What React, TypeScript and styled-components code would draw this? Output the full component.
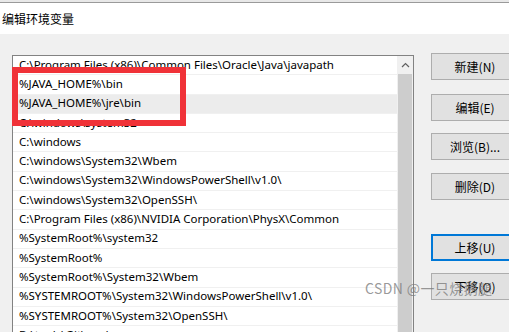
import React from "react";
import styled, { createGlobalStyle } from "styled-components";

const Global = createGlobalStyle`
  html, body { margin: 0; padding: 0; background: #f0f0f0; }
  body { font-family: "Noto Sans", "Noto Sans CJK SC", sans-serif; }
`;

const Window = styled.div`
  width: 509px;
  height: 332px;
  overflow: hidden;
  position: relative;
  background: #f0f0f0;
  display: flex;
  flex-direction: column;
`;

const TopEdge = styled.div`
  flex-shrink: 0;
  height: 2px;
  background: #e8e8e8;
  border-bottom: 1px solid #9a9a9a;
`;

const TitleBar = styled.div`
  flex-shrink: 0;
  height: 31px;
  background: #ffffff;
  display: flex;
  align-items: center;
  padding-left: 2px;
  font-family: "Noto Sans CJK SC", sans-serif;
  font-size: 12px;
  color: #000;
`;

const Body = styled.div`
  flex: 1;
  min-height: 0;
  display: flex;
  align-items: flex-start;
  padding: 21px 0 0 12px;
  gap: 17px;
`;

const ListBox = styled.div`
  position: relative;
  flex-shrink: 0;
  width: 400px;
  height: 300px;
  border: 1px solid #828282;
  border-bottom: none;
  background: #fff;
  display: flex;
`;

const Rows = styled.div`
  flex: 1;
  display: flex;
  flex-direction: column;
`;

const Row = styled.div<{ $sel?: boolean }>`
  flex-shrink: 0;
  height: 19.3px;
  box-sizing: border-box;
  border-bottom: 1px solid #f0f0f0;
  padding: 0 0 2px 6px;
  display: flex;
  align-items: center;
  font-family: "Noto Sans", "Noto Sans CJK SC", sans-serif;
  font-size: 11.5px;
  color: #000;
  white-space: nowrap;
  overflow: hidden;
  background: ${(p) => (p.$sel ? "#ececec" : "#fff")};
`;

const ScrollBar = styled.div`
  width: 16px;
  background: #f0f0f0;
  display: flex;
  flex-direction: column;
`;

const ArrowBtn = styled.div`
  height: 17px;
  display: flex;
  align-items: center;
  justify-content: center;
`;

const Thumb = styled.div`
  flex: 1;
  margin: 1px 1px 0 1px;
  background: #cdcdcd;
`;

const Highlight = styled.div`
  position: absolute;
  left: -1px;
  top: 11px;
  width: 162px;
  height: 47px;
  border: 6px solid #f03238;
  pointer-events: none;
`;

const Buttons = styled.div`
  flex-shrink: 0;
  display: flex;
  flex-direction: column;
  margin-top: -2px;
`;

const Button = styled.div<{ $focus?: boolean; $gap?: number }>`
  width: 88px;
  height: 27px;
  box-sizing: border-box;
  margin-top: ${(p) => p.$gap ?? 0}px;
  background: #e1e1e1;
  border: ${(p) => (p.$focus ? "2px solid #0078d7" : "1px solid #adadad")};
  display: flex;
  align-items: center;
  justify-content: center;
  font-family: "Noto Sans CJK SC", sans-serif;
  font-size: 12px;
  color: #000;
`;

const Watermark = styled.div`
  position: absolute;
  left: 365px;
  top: 278px;
  font-family: "Noto Sans CJK SC", sans-serif;
  font-size: 14px;
  color: rgba(120, 120, 120, 0.75);
  letter-spacing: 0.4px;
`;

const rows = [
  "C:\\Program Files (x86)\\Common Files\\Oracle\\Java\\javapath",
  "%JAVA_HOME%\\bin",
  "%JAVA_HOME%\\jre\\bin",
  "C:\\windows\\system32",
  "C:\\windows",
  "C:\\windows\\System32\\Wbem",
  "C:\\windows\\System32\\WindowsPowerShell\\v1.0\\",
  "C:\\windows\\System32\\OpenSSH\\",
  "C:\\Program Files (x86)\\NVIDIA Corporation\\PhysX\\Common",
  "%SystemRoot%\\system32",
  "%SystemRoot%",
  "%SystemRoot%\\System32\\Wbem",
  "%SYSTEMROOT%\\System32\\WindowsPowerShell\\v1.0\\",
  "%SYSTEMROOT%\\System32\\OpenSSH\\",
  "D:\\tools\\Git\\cmd",
];

const buttons: { label: string; gap: number; focus?: boolean }[] = [
  { label: "新建(N)", gap: 0 },
  { label: "编辑(E)", gap: 14 },
  { label: "浏览(B)...", gap: 12 },
  { label: "删除(D)", gap: 13 },
  { label: "上移(U)", gap: 34, focus: true },
  { label: "下移(O)", gap: 12 },
];

export default function App() {
  return (
    <>
      <Global />
      <Window>
        <TopEdge />
        <TitleBar>编辑环境变量</TitleBar>
        <Body>
          <ListBox>
            <Rows>
              {rows.map((r, i) => (
                <Row key={i} $sel={i === 2}>
                  {r}
                </Row>
              ))}
            </Rows>
            <ScrollBar>
              <ArrowBtn>
                <svg width="9" height="6" viewBox="0 0 9 6">
                  <path d="M1 5 L4.5 1.5 L8 5" fill="none" stroke="#606060" strokeWidth="1.2" />
                </svg>
              </ArrowBtn>
              <Thumb />
            </ScrollBar>
            <Highlight />
          </ListBox>
          <Buttons>
            {buttons.map((b) => (
              <Button key={b.label} $gap={b.gap} $focus={b.focus}>
                {b.label}
              </Button>
            ))}
          </Buttons>
        </Body>
        <Watermark>CSDN @一只烧鹅腿</Watermark>
      </Window>
    </>
  );
}
